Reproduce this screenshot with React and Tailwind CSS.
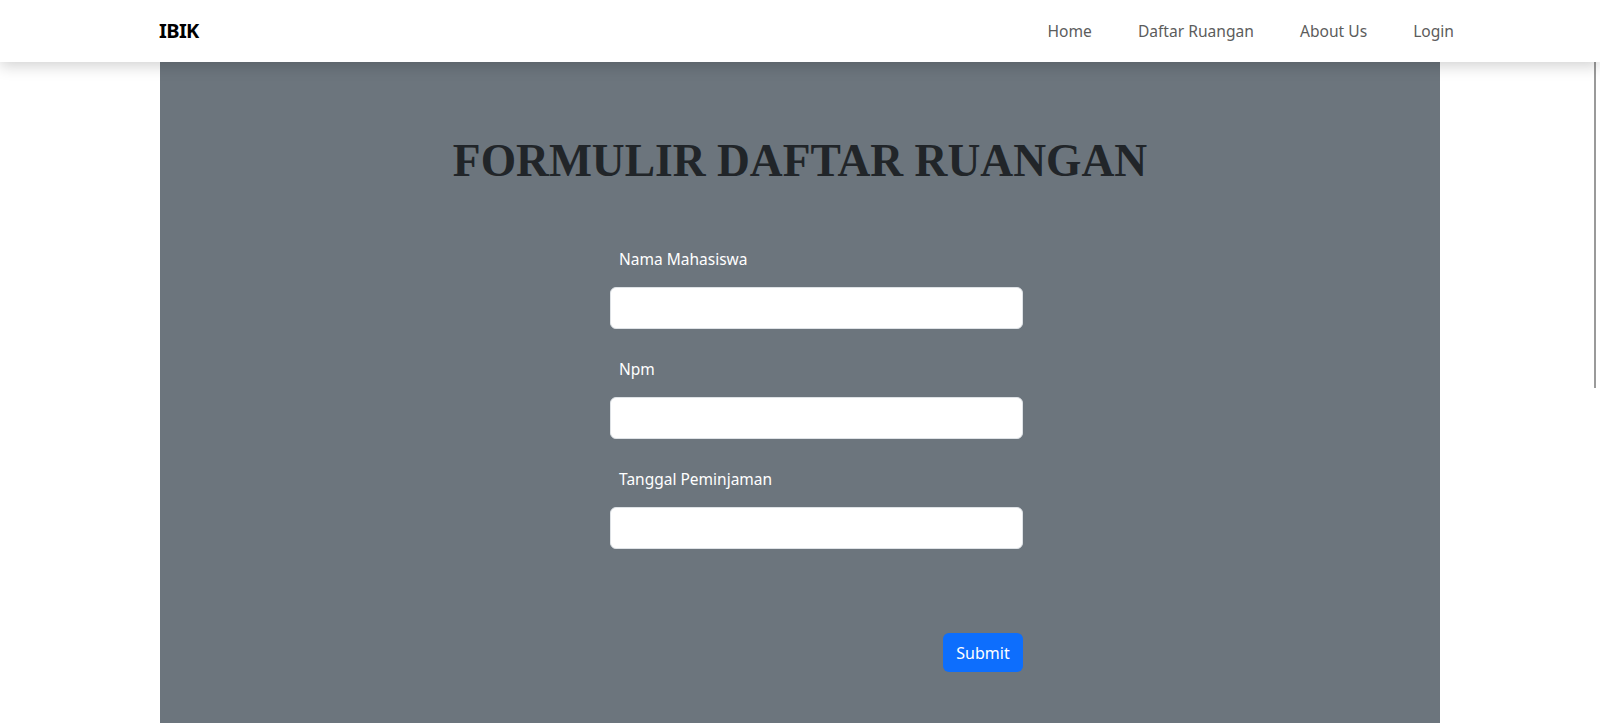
const NAV_LINKS = ['Home', 'Daftar Ruangan', 'About Us', 'Login'];
const FIELDS = ['Nama Mahasiswa', 'Npm', 'Tanggal Peminjaman'];

const Navbar = () => {
    return (
        <nav className="relative z-10 flex h-[62px] items-center justify-between bg-white pl-[159px] pr-[146px] shadow-[0_4px_14px_rgba(0,0,0,0.18)]">
            <a className="text-[20px] font-bold tracking-[-0.6px] text-black">IBIK</a>
            <ul className="flex items-center gap-[46px]">
                {NAV_LINKS.map((link) => (
                    <li key={link}>
                        <a className="text-[15.6px] text-[#5c5c5c]">{link}</a>
                    </li>
                ))}
            </ul>
        </nav>
    );
};

const App = () => {
    return (
        <div className="relative h-[723px] overflow-hidden bg-white font-['Noto_Sans',sans-serif]">
            <Navbar />
            <main className="mx-[160px] flex h-[661px] w-[1280px] flex-col bg-[#6c757d]">
                <h1 className="mt-[72px] text-center font-['Liberation_Serif',serif] text-[45.5px] font-bold leading-[54px] text-[#212529]">
                    FORMULIR DAFTAR RUANGAN
                </h1>
                <form className="ml-[450px] mt-[60px] flex w-[413px] flex-col">
                    {FIELDS.map((field, i) => (
                        <div key={field} className={i > 0 ? 'mt-[29px]' : ''}>
                            <label className="block pl-[9px] text-[15.5px] leading-[22px] text-white">{field}</label>
                            <input
                                type="text"
                                className="mt-[17px] block h-[42px] w-full rounded-[6px] border border-[#dee2e6] bg-white px-3 outline-none"
                            />
                        </div>
                    ))}
                    <button
                        type="button"
                        className="ml-auto mt-[84px] h-[39px] w-[80px] rounded-[6px] bg-[#0d6efd] text-[16px] text-white"
                    >
                        Submit
                    </button>
                </form>
            </main>
            {/* thin overlay scrollbar on the right edge */}
            <div className="absolute right-[4px] top-[62px] h-[326px] w-[2px] bg-[#9a9a9a]" />
        </div>
    );
};

export default App;
